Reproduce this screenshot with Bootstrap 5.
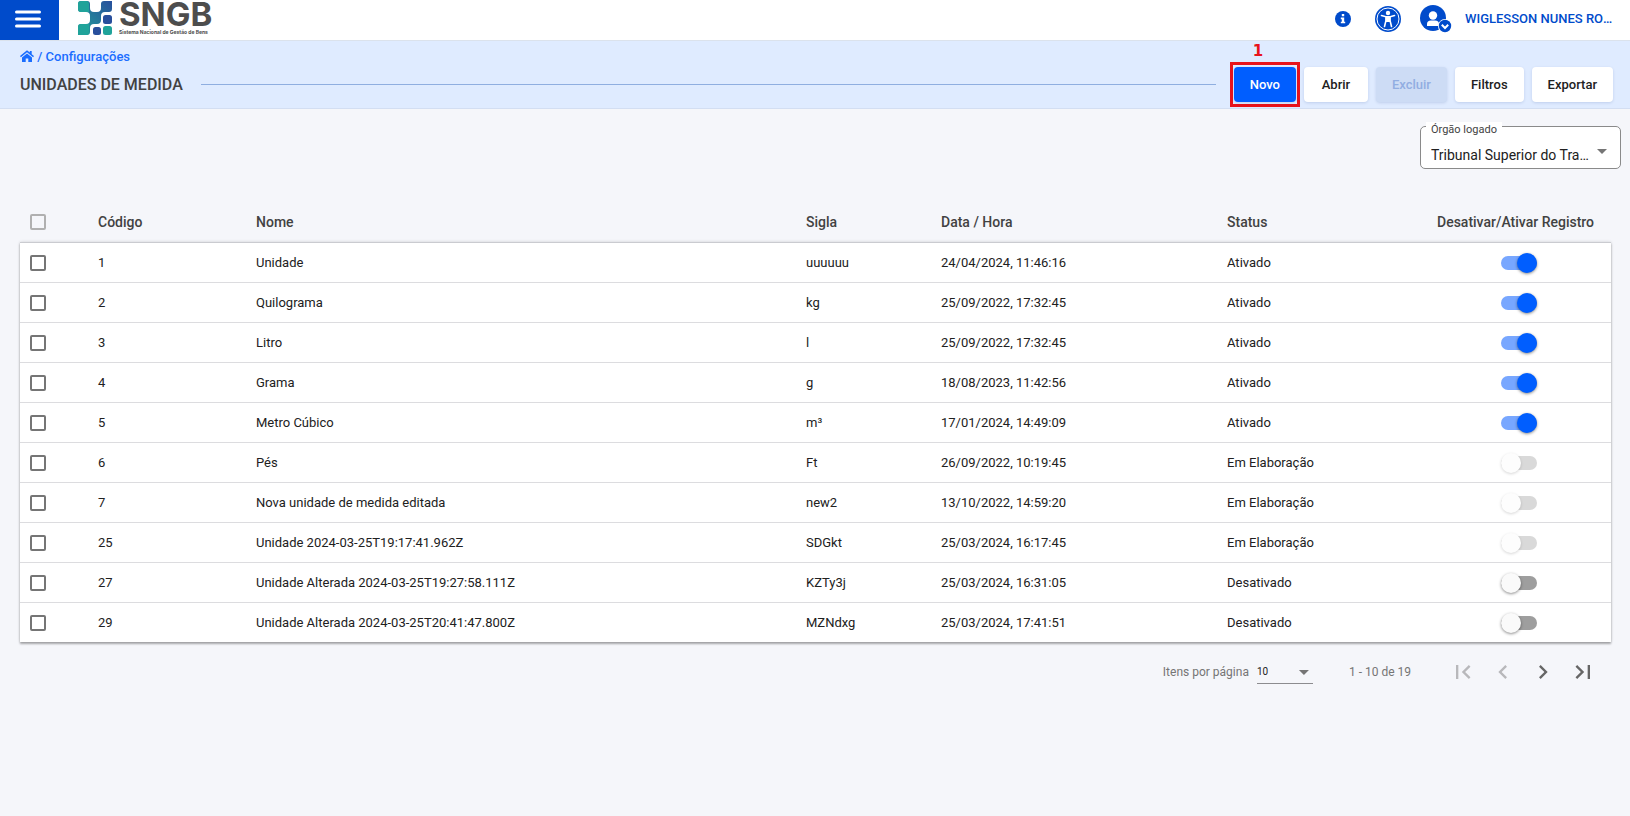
<!DOCTYPE html>
<html lang="pt-BR">
<head>
<meta charset="utf-8">
<meta name="viewport" content="width=device-width, initial-scale=1">
<title>SNGB - Unidades de Medida</title>
<link href="https://cdn.jsdelivr.net/npm/bootstrap@5.3.0/dist/css/bootstrap.min.css" rel="stylesheet">
<style>
body { font-family: Roboto, "Liberation Sans", sans-serif; font-size: 13px; line-height: 20px; color: #212121; background: #f5f6fa; }
a { text-decoration: none; }
.topbar { height: 41px; border-bottom: 1px solid #dbe2ec; background: #fff; }
.menu-btn { width: 59px; border: 0; background: #004bcb; color: #fff; padding: 0 4px 3px 0; }
.brand { margin-left: 19px; color: #4d4d4d; gap: 6px; font-family: Inter, sans-serif; }
.brand:hover { color: #4d4d4d; }
.brand-name { font-size: 33px; line-height: 28px; font-weight: 700; }
.brand-tag { font-size: 5px; line-height: 8px; font-weight: 700; }
.tools { padding-right: 17px; padding-bottom: 2px; }
.icon-btn { border: 0; padding: 0; background: none; color: #004bcb; }
.user-link { margin-left: 19px; gap: 13px; }
.user-name { color: #004bcb; font-weight: 500; width: 148px; }
.subbar { background: #dfebff; border-bottom: 1px solid #d3def2; padding: 6px 17px 6px 20px; }
.crumbs, .crumbs a { color: #1a6dff; font-size: 13px; font-weight: 500; line-height: 20px; }
.crumbs svg { vertical-align: -1px; }
.page-title { font-size: 16px; line-height: 24px; font-weight: 500; color: #424242; margin: 0; }
.title-rule { height: 1px; background: #8faee0; margin: 0 18px; }
.act { --bs-btn-font-size: 13px; --bs-btn-font-weight: 500; --bs-btn-line-height: 19px; --bs-btn-padding-y: 8px; --bs-btn-padding-x: 16px; --bs-btn-border-width: 0; --bs-btn-border-radius: 4px; --bs-btn-bg: #fff; --bs-btn-color: #212121; --bs-btn-disabled-bg: #cddcf5; --bs-btn-disabled-color: #92aee2; --bs-btn-disabled-opacity: 1; min-width: 64px; box-shadow: 0 1px 3px rgba(0,40,120,.14); }
.act-primary { --bs-btn-bg: #005eff; --bs-btn-color: #fff; --bs-btn-hover-bg: #004bcb; --bs-btn-hover-color: #fff; min-width: 62px; }
.callout { border: 3px solid #e8131b; padding: 2px 1px; margin: -5px -4px; }
.callout-num { left: 20px; top: -24px; font: 700 15px/20px "DejaVu Sans", sans-serif; color: #e8131b; }
.org { width: 201px; margin: 17px 9px 0 auto; }
.org label { left: 6px; top: -4px; padding: 0 5px; background: #fff; font-size: 11px; line-height: 16px; color: #424242; }
.org select { width: 100%; height: 43px; padding: 14px 30px 0 10px; border: 1px solid #8a8a8a; border-radius: 5px; background: #fff; appearance: none; font-size: 14px; color: #212121; text-overflow: ellipsis; white-space: nowrap; overflow: hidden; }
.arrow { width: 10px; height: 5px; background: #757575; clip-path: polygon(0 0, 100% 0, 50% 100%); pointer-events: none; }
.org .arrow { right: 14px; top: 23px; }
.list-area { padding: 33px 19px 0 20px; }
.units { table-layout: fixed; width: 100%; border-collapse: separate; border-spacing: 0; }
.units th, .units td { padding: 0; height: 40px; vertical-align: middle; white-space: nowrap; }
.units th { font-size: 14px; font-weight: 500; color: #424242; }
.units td { background: #fff; border-top: 1px solid #dcdcdf; }
.units tbody { box-shadow: 0 2px 2px rgba(0,0,0,.3), 0 0 3px rgba(0,0,0,.16); }
.units tbody tr:first-child td { border-top-color: #cacbd0; }
.units .pick { padding-left: 10px; }
.box { appearance: none; display: block; width: 16px; height: 16px; margin: 0; border: 2px solid #757575; border-radius: 2px; }
.box:checked { background: #005eff; border-color: #005eff; }
.box-all { border-color: #b0b0b0; }
.toggle { appearance: none; display: block; position: relative; width: 36px; height: 14px; margin: 0 0 0 64px; border-radius: 7px; background: #9e9e9e; }
.toggle::before { content: ""; position: absolute; left: 0; top: -3px; width: 20px; height: 20px; border-radius: 50%; background: #fafafa; box-shadow: 0 1px 3px rgba(0,0,0,.45); }
.toggle:checked { background: #78a7ff; }
.toggle:checked::before { left: 16px; background: #005eff; }
.toggle:disabled { background: #d9d9d9; }
.toggle:disabled::before { background: #fdfdfd; box-shadow: 0 1px 3px rgba(0,0,0,.16); }
.pager { padding: 4px 8px 0 0; height: 56px; font-size: 12px; color: #757575; }
.pager select { width: 56px; height: 24px; border: 0; border-bottom: 1px solid #8c8c8f; background: transparent; appearance: none; padding: 0; font-size: 10px; color: #212121; }
.pager .arrow { right: 4px; top: 10px; }
.range { margin: 0 32px 0 36px; }
.page-btn { width: 40px; height: 40px; border: 0; padding: 0; background: none; color: #666; }
.page-btn:disabled { color: #b8b8bb; }
</style>
</head>
<body>
<header class="topbar d-flex">
  <button class="menu-btn d-flex align-items-center justify-content-center" type="button" aria-label="Menu">
    <svg width="26" height="18" viewBox="0 0 26 18"><path d="M1.5 2H24.500M1.500 9H24.500M1.500 16H24.500" stroke="currentColor" stroke-width="3" stroke-linecap="round"/></svg>
  </button>
  <a class="brand d-flex align-items-start" href="#">
    <svg width="35" height="35" viewBox="0 0 35 35" aria-hidden="true">
      <defs><linearGradient id="tealBlue" x1="0" y1="1" x2="1" y2="0"><stop stop-color="#20a39a"/><stop offset="1" stop-color="#284f9c"/></linearGradient></defs>
      <path d="M3 1H9Q12 1 12 4V8Q12 12 16 12H19Q23 12 23 8V4Q23 1 26 1H34V9Q34 12 31 12H27Q23 12 23 16V20Q23 24 19 24H16Q12 24 12 28V32Q12 35 9 35H0V27Q0 24 3 24H8Q12 24 12 20V16Q12 12 8 12H3Q0 12 0 9V4Q0 1 3 1Z" fill="url(#tealBlue)"/>
      <path d="M3 1H8Q11 1 11 4V12H3Q0 12 0 9V4Q0 1 3 1ZM3 24H11V32Q11 35 8 35H3Q0 35 0 32V27Q0 24 3 24Z" fill="#20a39a"/>
      <rect x="25" y="15" width="9" height="9" rx="2.500" fill="#284f9c"/><rect x="15" y="27" width="8" height="8" rx="2.500" fill="#284f9c"/><rect x="25" y="26" width="9" height="9" rx="2.500" fill="#20a39a"/>
    </svg>
    <span class="d-flex flex-column"><span class="brand-name">SNGB</span><span class="brand-tag">Sistema Nacional de Gestão de Bens</span></span>
  </a>
  <div class="tools d-flex align-items-center ms-auto">
    <button class="icon-btn d-flex me-4" type="button" aria-label="Informações"><svg width="16" height="16" viewBox="0 0 16 16"><circle cx="8" cy="8" r="8" fill="currentColor"/><path d="M6.800 3H9.200V5.300H6.800ZM5.800 6.600H9.200V10.700H10.200V12.300H5.800V10.700H6.800V8.200H5.800Z" fill="#fff"/></svg></button>
    <button class="icon-btn d-flex" type="button" aria-label="Acessibilidade"><svg width="26" height="26" viewBox="0 0 26 26"><circle cx="13" cy="13" r="13" fill="currentColor"/><circle cx="13" cy="13" r="11" fill="none" stroke="#fff"/><circle cx="13" cy="7" r="2.200" fill="#fff"/><path d="M6.500 9.500L11 10.800V14.500L9.500 20.500M19.500 9.500L15 10.800V14.500L16.500 20.500" fill="none" stroke="#fff" stroke-width="1.600" stroke-linecap="round"/><path d="M10.500 10H15.500V16H10.500Z" fill="#fff"/></svg></button>
    <a class="user-link d-flex align-items-center" href="#"><svg width="32" height="28" viewBox="0 0 32 28" color="#004bcb"><circle cx="13" cy="13" r="13" fill="currentColor"/><circle cx="13" cy="10.500" r="4.200" fill="#fff"/><path d="M7 21V19Q7 15.500 11 15.500H15Q19 15.500 19 19V21Z" fill="#fff"/><circle cx="25" cy="21" r="7" fill="#fff"/><circle cx="25" cy="21" r="6.200" fill="currentColor"/><path d="M21.800 19.800L25 23L28.200 19.800" fill="none" stroke="#fff" stroke-width="2"/></svg><span class="user-name text-truncate">WIGLESSON NUNES RODRIGUES</span></a>
  </div>
</header>

<section class="subbar">
  <nav class="crumbs" aria-label="Trilha"><a href="#" aria-label="Início"><svg width="14" height="12" viewBox="0 0 14 12" fill="currentColor"><path d="M7 3.400L12 7.500V12H8.300V8.500H5.700V12H2V7.500ZM7 .3L9.800 2.600V1H11.700V4.200L14 6.100L13.100 7.200L7 2.200L.9 7.200L0 6.100Z"/></svg></a> / <a href="#">Configurações</a></nav>
  <div class="d-flex align-items-center">
    <h1 class="page-title">UNIDADES DE MEDIDA</h1>
    <div class="title-rule flex-grow-1"></div>
    <div class="d-flex align-items-center gap-2">
      <div class="callout position-relative"><span class="callout-num position-absolute">1</span><button class="btn act act-primary d-block" type="button">Novo</button></div>
      <button class="btn act" type="button">Abrir</button>
      <button class="btn act" type="button" disabled>Excluir</button>
      <button class="btn act" type="button">Filtros</button>
      <button class="btn act" type="button">Exportar</button>
    </div>
  </div>
</section>

<main>
  <div class="org position-relative">
    <label class="position-absolute" for="orgao">Órgão logado</label>
    <select id="orgao"><option>Tribunal Superior do Trabalho</option></select>
    <span class="arrow position-absolute"></span>
  </div>
  <div class="list-area">
    <table class="units">
      <colgroup><col style="width:78px"><col style="width:158px"><col><col style="width:135px"><col style="width:286px"><col style="width:210px"><col style="width:174px"></colgroup>
      <thead><tr><th class="pick"><input class="box box-all" type="checkbox" aria-label="Selecionar todos"></th><th>Código</th><th>Nome</th><th>Sigla</th><th>Data / Hora</th><th>Status</th><th>Desativar/Ativar Registro</th></tr></thead>
      <tbody id="rows"></tbody>
    </table>
    <div class="pager d-flex align-items-center justify-content-end">
      <label for="tam" class="me-2">Itens por página</label>
      <div class="position-relative d-flex"><select id="tam"><option>10</option><option>20</option></select><span class="arrow position-absolute"></span></div>
      <span class="range">1 - 10 de 19</span>
      <button class="page-btn" type="button" disabled aria-label="Primeira página"><svg width="28" height="28" viewBox="0 0 24 24" fill="currentColor"><path d="M18.410 16.590L13.820 12l4.590-4.590L17 6l-6 6 6 6zM6 6h2v12H6z"/></svg></button>
      <button class="page-btn" type="button" disabled aria-label="Página anterior"><svg width="28" height="28" viewBox="0 0 24 24" fill="currentColor"><path d="M15.410 7.410L14 6l-6 6 6 6 1.410-1.410L10.830 12z"/></svg></button>
      <button class="page-btn" type="button" aria-label="Próxima página"><svg width="28" height="28" viewBox="0 0 24 24" fill="currentColor"><path d="M10 6L8.590 7.410 13.170 12l-4.580 4.590L10 18l6-6z"/></svg></button>
      <button class="page-btn" type="button" aria-label="Última página"><svg width="28" height="28" viewBox="0 0 24 24" fill="currentColor"><path d="M5.590 7.410L10.180 12l-4.590 4.590L7 18l6-6-6-6zM16 6h2v12h-2z"/></svg></button>
    </div>
  </div>
</main>
<script src="https://cdn.jsdelivr.net/npm/bootstrap@5.3.0/dist/js/bootstrap.bundle.min.js"></script>
<script>
const units = [
  ["1", "Unidade", "uuuuuu", "24/04/2024, 11:46:16", "Ativado"],
  ["2", "Quilograma", "kg", "25/09/2022, 17:32:45", "Ativado"],
  ["3", "Litro", "l", "25/09/2022, 17:32:45", "Ativado"],
  ["4", "Grama", "g", "18/08/2023, 11:42:56", "Ativado"],
  ["5", "Metro Cúbico", "m³", "17/01/2024, 14:49:09", "Ativado"],
  ["6", "Pés", "Ft", "26/09/2022, 10:19:45", "Em Elaboração"],
  ["7", "Nova unidade de medida editada", "new2", "13/10/2022, 14:59:20", "Em Elaboração"],
  ["25", "Unidade 2024-03-25T19:17:41.962Z", "SDGkt", "25/03/2024, 16:17:45", "Em Elaboração"],
  ["27", "Unidade Alterada 2024-03-25T19:27:58.111Z", "KZTy3j", "25/03/2024, 16:31:05", "Desativado"],
  ["29", "Unidade Alterada 2024-03-25T20:41:47.800Z", "MZNdxg", "25/03/2024, 17:41:51", "Desativado"]
];
const toggleState = { "Ativado": "checked", "Em Elaboração": "disabled", "Desativado": "" };
document.getElementById("rows").innerHTML = units.map(u =>
  `<tr><td class="pick"><input class="box" type="checkbox" aria-label="Selecionar ${u[1]}"></td>` +
  u.map(v => `<td>${v}</td>`).join("") +
  `<td><input class="toggle" type="checkbox" role="switch" aria-label="Ativar ${u[1]}" ${toggleState[u[4]]}></td></tr>`
).join("");
</script>
</body>
</html>
